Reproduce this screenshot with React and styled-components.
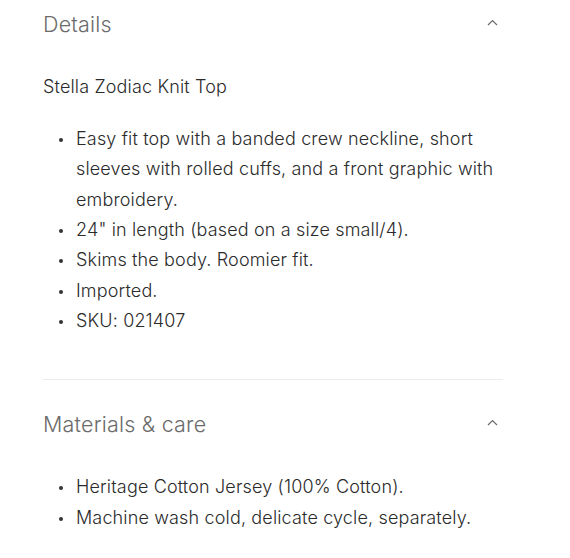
import styled, { createGlobalStyle } from 'styled-components';

const GlobalStyle = createGlobalStyle`
  body {
    margin: 0;
    background: #fff;
    font-family: Inter, "Noto Sans", sans-serif;
  }
`;

const sections = [
  {
    title: 'Details',
    intro: 'Stella Zodiac Knit Top',
    items: [
      'Easy fit top with a banded crew neckline, short sleeves with rolled cuffs, and a front graphic with embroidery.',
      '24" in length (based on a size small/4).',
      'Skims the body. Roomier fit.',
      'Imported.',
      'SKU: 021407',
    ],
  },
  {
    title: 'Materials & care',
    items: [
      'Heritage Cotton Jersey (100% Cotton).',
      'Machine wash cold, delicate cycle, separately.',
    ],
  },
];

const Chevron = () => (
  <svg width='11' height='7' viewBox='0 0 11 7' fill='none'>
    <path d='M1 6L5.5 1.5L10 6' stroke='#6b6b6b' strokeWidth='1.2' />
  </svg>
);

const App = () => {
  return (
    <Page>
      <GlobalStyle />
      {sections.map((section, index) => (
        <Section key={section.title} $last={index === sections.length - 1}>
          <Header>
            <Title>{section.title}</Title>
            <Chevron />
          </Header>
          <Body>
            {section.intro && <Intro>{section.intro}</Intro>}
            <List>
              {section.items.map((item) => (
                <Item key={item}>{item}</Item>
              ))}
            </List>
          </Body>
        </Section>
      ))}
    </Page>
  );
};
export default App;

const Page = styled.div`
  width: 460px;
  padding: 0 43px;
  color: #2b2b2b;
`;

const Section = styled.section`
  padding-bottom: ${(p) => (p.$last ? '20px' : '43px')};
  border-bottom: ${(p) => (p.$last ? 'none' : '1px solid #ececec')};
  & + & {
    padding-top: 20px;
  }
`;

const Header = styled.div`
  height: 48px;
  display: flex;
  align-items: center;
  justify-content: space-between;
  padding-right: 5px;

  svg {
    margin-top: -4px;
  }
`;

const Title = styled.h2`
  margin: 0;
  font-size: 21.5px;
  font-weight: 300;
  letter-spacing: 0.2px;
  color: #6b6b6b;
`;

const Body = styled.div`
  padding-top: 24px;
`;

const Intro = styled.p`
  margin: 0 0 22px;
  font-size: 18px;
  font-weight: 350;
  letter-spacing: 0.15px;
  line-height: 30px;
`;

const List = styled.ul`
  margin: 0;
  padding: 0 0 0 33px;
  list-style: none;
`;

const Item = styled.li`
  position: relative;
  font-size: 18px;
  font-weight: 350;
  letter-spacing: 0.15px;
  line-height: 30.33px;

  &::before {
    content: '';
    position: absolute;
    left: -17px;
    top: 14px;
    width: 4px;
    height: 4px;
    border-radius: 50%;
    background: #333;
  }
`;
